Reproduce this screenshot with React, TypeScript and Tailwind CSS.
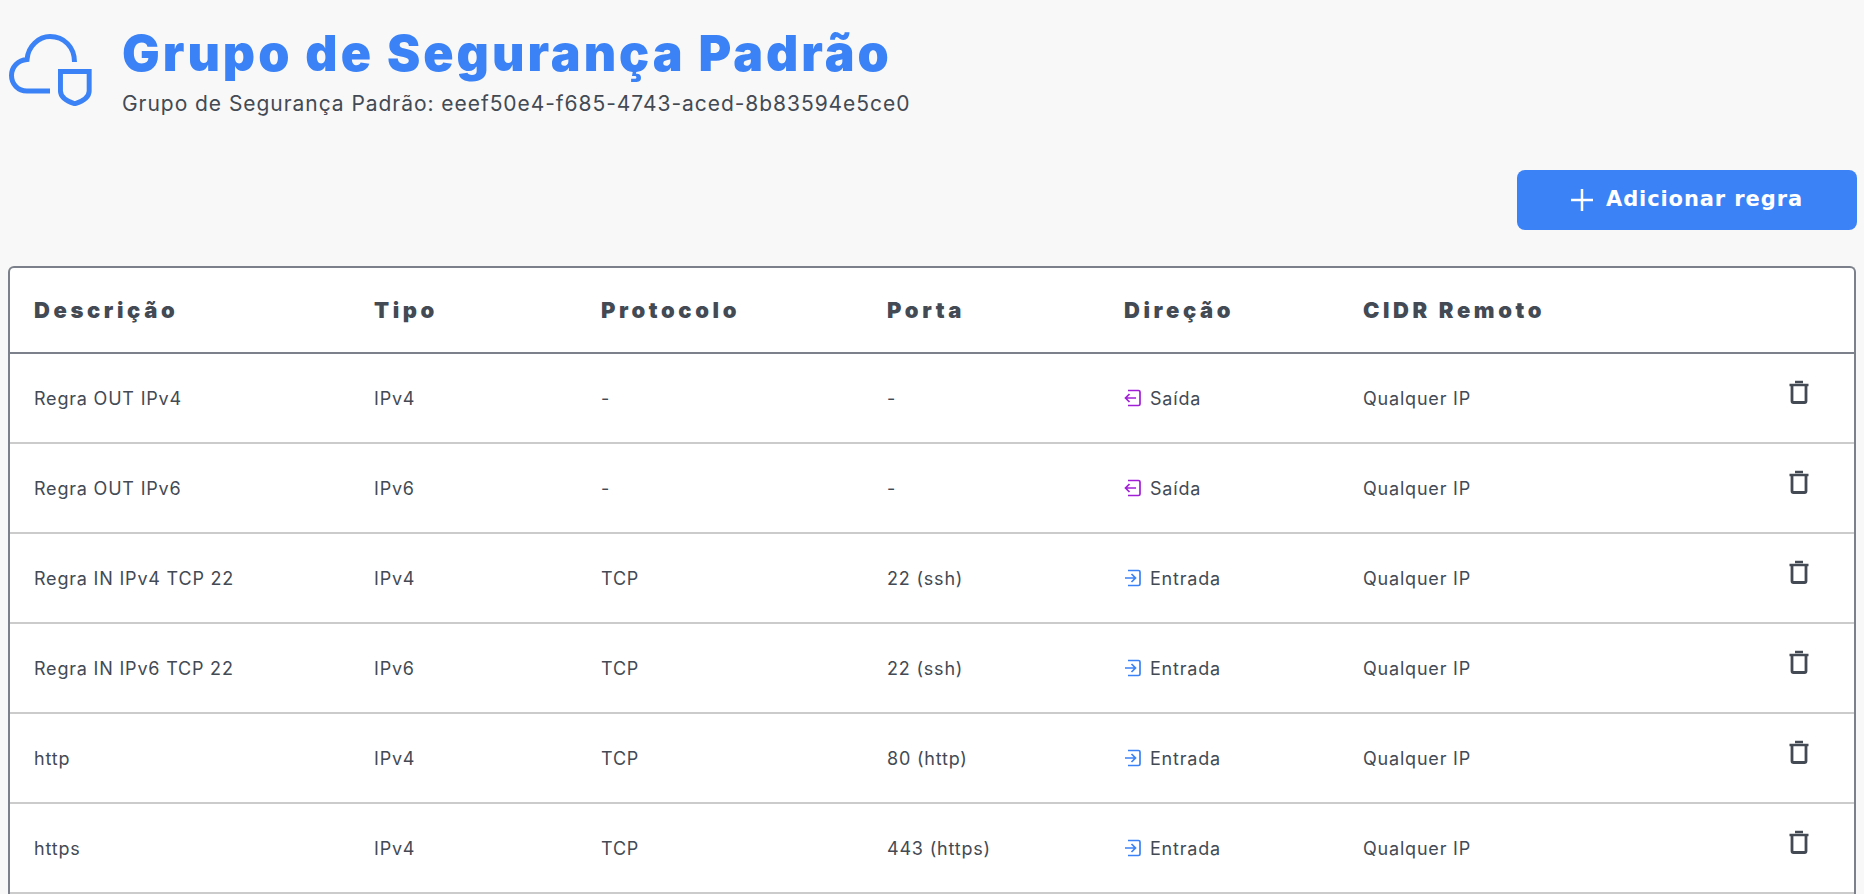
const rows = [
  { name: "Regra OUT IPv4", type: "IPv4", protocol: "-", port: "-", out: true },
  { name: "Regra OUT IPv6", type: "IPv6", protocol: "-", port: "-", out: true },
  { name: "Regra IN IPv4 TCP 22", type: "IPv4", protocol: "TCP", port: "22 (ssh)", out: false },
  { name: "Regra IN IPv6 TCP 22", type: "IPv6", protocol: "TCP", port: "22 (ssh)", out: false },
  { name: "http", type: "IPv4", protocol: "TCP", port: "80 (http)", out: false },
  { name: "https", type: "IPv4", protocol: "TCP", port: "443 (https)", out: false },
];

const columns = ["Descrição", "Tipo", "Protocolo", "Porta", "Direção", "CIDR Remoto"];

const CloudShield = () => (
  <svg width="84" height="76" viewBox="0 0 84 76" fill="none" stroke="#3b82f6" strokeWidth="5">
    <path d="M42 61H19C10 61 3.500 54 3.500 45.500C3.500 37 10 30 19 29.500C20 16 31 6.500 42 6.500C56 6.500 66.500 17 66.500 32" />
    <path d="M53.500 42.500H82.500V62C82.500 69 74 73 68 75C62 73 53.500 69 53.500 62Z" transform="translate(-0.500 -0.500) scale(0.99)" />
  </svg>
);

const OutIcon = () => (
  <svg width="17" height="18" viewBox="0 0 17 18" fill="none" stroke="#a21fd8" strokeWidth="1.700" className="shrink-0">
    <path d="M4 1.500H14.500C15.500 1.500 16 2 16 3V15C16 16 15.500 16.500 14.500 16.500H4" />
    <path d="M12 9H1.500M5.500 5L1.500 9L5.500 13" />
  </svg>
);

const InIcon = () => (
  <svg width="17" height="18" viewBox="0 0 17 18" fill="none" stroke="#3b82f6" strokeWidth="1.700" className="shrink-0">
    <path d="M4 1.500H14.500C15.500 1.500 16 2 16 3V15C16 16 15.500 16.500 14.500 16.500H4" />
    <path d="M1 9H11.500M7.500 5L11.500 9L7.500 13" />
  </svg>
);

const TrashIcon = () => (
  <svg width="20" height="24" viewBox="0 0 20 24" fill="none" stroke="#434a54">
    <path d="M0.500 5H19.500" strokeWidth="2.500" />
    <path d="M6 2H14" strokeWidth="2.500" />
    <path d="M3 6V21C3 22 3.500 22.500 4.500 22.500H15.500C16.500 22.500 17 22 17 21V6" strokeWidth="2.800" />
  </svg>
);

export default function App() {
  return (
    <div
      className="h-[894px] overflow-hidden bg-[#f8f8f8] text-[#434a54]"
      style={{ fontFamily: "Inter, 'Noto Sans', sans-serif" }}
    >
      <div className="flex items-start pt-[30px] pl-[8px]">
        <CloudShield />
        <div className="ml-[30px]">
          <h1 className="text-[50px] leading-[46px] font-black tracking-[3px] text-[#3b82f6]">
            Grupo de Segurança Padrão
          </h1>
          <p className="mt-[14px] text-[21px] leading-[28px] tracking-[0.950px]">
            Grupo de Segurança Padrão: eeef50e4-f685-4743-aced-8b83594e5ce0
          </p>
        </div>
      </div>
      <div className="mt-[52px] flex justify-end pr-[7px]">
        <button
          className="flex h-[60px] w-[340px] items-center justify-center gap-[13px] rounded-[8px] bg-[#3b82f6] text-[21px] font-bold tracking-[0.900px] text-white"
          style={{ fontFamily: "'DejaVu Sans', sans-serif" }}
        >
          <svg width="22" height="22" viewBox="0 0 22 22" stroke="white" strokeWidth="2.500">
            <path d="M11 0V22M0 11H22" />
          </svg>
          Adicionar regra
        </button>
      </div>
      <div className="mx-[8px] mt-[36px] rounded-t-[6px] border-x-2 border-t-2 border-[#7b808a] bg-white">
        <table className="w-full table-fixed border-collapse">
          <colgroup>
            <col className="w-[364px]" />
            <col className="w-[227px]" />
            <col className="w-[286px]" />
            <col className="w-[237px]" />
            <col className="w-[239px]" />
            <col className="w-[380px]" />
            <col />
          </colgroup>
          <thead>
            <tr className="h-[85px] border-b-2 border-[#7b808a]">
              {columns.map((column, i) => (
                <th
                  key={column}
                  className={`text-left text-[22px] font-black tracking-[3.600px] ${i === 0 ? "pl-[24px]" : ""}`}
                >
                  {column}
                </th>
              ))}
              <th />
            </tr>
          </thead>
          <tbody>
            {rows.map((row) => (
              <tr key={row.name} className="h-[90px] border-b-2 border-[#cbcbcb] text-[18px] tracking-[0.800px]">
                <td className="pl-[24px]">{row.name}</td>
                <td>{row.type}</td>
                <td>{row.protocol}</td>
                <td>{row.port}</td>
                <td>
                  <div className="flex items-center gap-[9px]">
                    {row.out ? <OutIcon /> : <InIcon />}
                    {row.out ? "Saída" : "Entrada"}
                  </div>
                </td>
                <td>Qualquer IP</td>
                <td>
                  <div className="-mt-[12px] flex justify-center">
                    <TrashIcon />
                  </div>
                </td>
              </tr>
            ))}
          </tbody>
        </table>
      </div>
    </div>
  );
}
